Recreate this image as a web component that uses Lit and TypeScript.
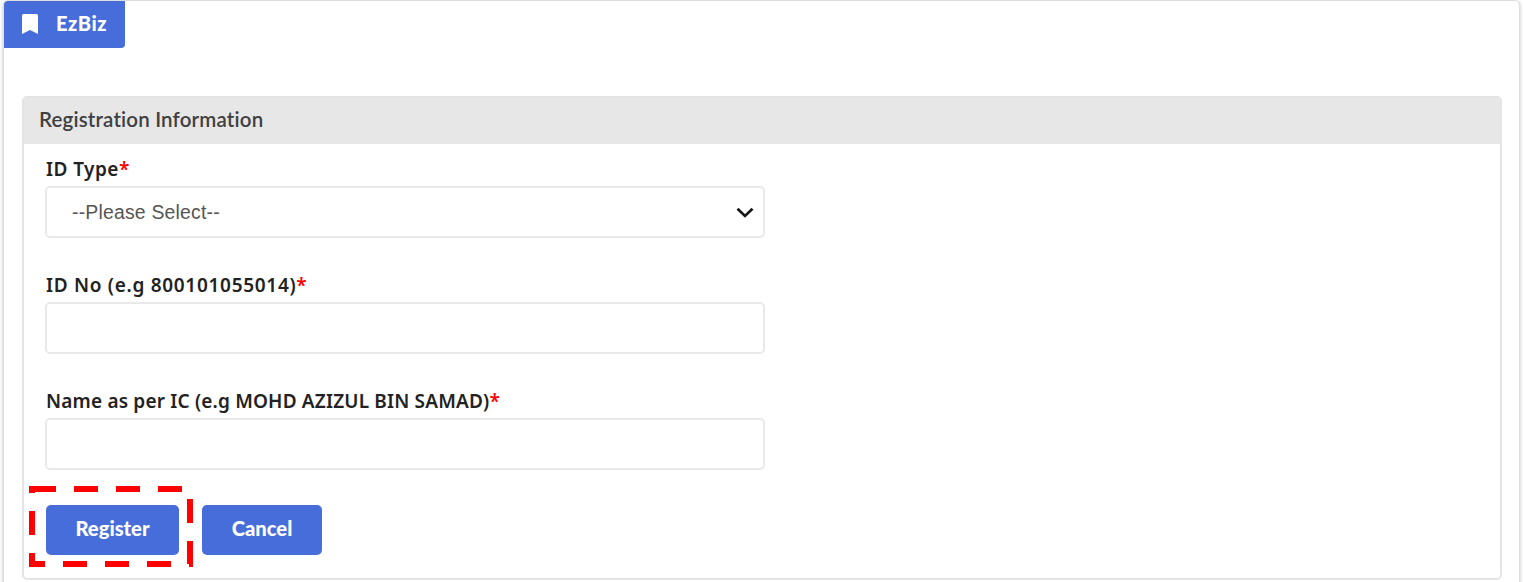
import { LitElement, html, css } from "lit";
import { customElement, property } from "lit/decorators.js";

@customElement("form-field")
class FormField extends LitElement {
  @property() label = "";
  @property({ type: Boolean }) select = false;

  static styles = css`
    :host { display: block; width: 720px; }
    .label {
      display: block; height: 28px; padding-left: 1px; white-space: nowrap;
      font: 600 19px/28px "Noto Sans", sans-serif; color: #222;
      letter-spacing: var(--label-spacing, 0);
    }
    .req { color: #f00; }
    .control {
      box-sizing: border-box; width: 720px; height: 52px; margin-top: 3px;
      border: 2px solid #e9e9e9; border-radius: 5px; background: #fff;
      display: flex; align-items: center; justify-content: space-between;
      padding: 0 9px 0 25px; color: #555;
      font: 19.4px/24px "Liberation Sans", Arial, sans-serif;
    }
    input { outline: none; }
    .value { letter-spacing: 0.2px; }
  `;

  render() {
    return html`
      <label class="label">${this.label}<span class="req">*</span></label>
      ${this.select
        ? html`<div class="control" role="combobox">
            <span class="value">--Please Select--</span>
            <svg width="18" height="12" viewBox="0 0 18 12" fill="none" stroke="#161616" stroke-width="2.7">
              <path d="M1.5 2.8 9 9.9 16.5 2.8" />
            </svg>
          </div>`
        : html`<input class="control" type="text" />`}
    `;
  }
}

@customElement("app-root")
class AppRoot extends LitElement {
  static styles = css`
    :host {
      display: block; box-sizing: border-box; height: 582px; overflow: hidden;
      background: #fff; padding: 0 3px;
      font-family: Lato, sans-serif;
    }
    .page {
      box-sizing: border-box; height: 600px; border: 1px solid #dedede;
      border-radius: 5px; box-shadow: 0 1px 3px 1px #dcdcdc; background: #fff;
    }
    .tab {
      box-sizing: border-box; width: 121px; height: 47px; background: #476ddb;
      border-radius: 4px 0 4px 0; color: #fff; display: flex; align-items: center;
      padding: 0 0 1px 18px; gap: 18px; font-size: 20px; font-weight: 900;
      line-height: 24px; letter-spacing: 0.6px;
    }
    .tab svg { flex: none; }
    .tab-name { margin-top: -2px; }
    .panel {
      box-sizing: border-box; width: 1480px; height: 484px; margin: 48px 0 0 18px;
      border: 2px solid #e4e4e4; border-radius: 5px;
    }
    .head {
      box-sizing: border-box; height: 46px; padding-left: 15px; background: #e7e7e7;
      color: #404040; font-size: 20.5px; line-height: 43px; font-weight: 600;
      letter-spacing: 0.17px;
    }
    .body { padding: 11px 0 0 21px; }
    .fields { display: grid; row-gap: 33px; }
    .id-type { --label-spacing: 0.45px; }
    .id-no { --label-spacing: 0.7px; }
    .full-name { --label-spacing: 0.18px; }
    .actions { display: flex; gap: 23px; margin-top: 35px; padding-left: 1px; }
    .btn {
      box-sizing: border-box; width: 120px; height: 50px; padding: 0 0 3px; border: 0;
      border-radius: 5px; background: #476ddb; color: #fff; text-align: center;
      font: 900 20.2px/47px Lato, sans-serif;
    }
    .primary { position: relative; width: 133px; }
    .marker { position: absolute; left: -17px; top: -19px; overflow: visible; pointer-events: none; }
  `;

  render() {
    return html`
      <main class="page">
        <div class="tab">
          <svg width="16" height="20" viewBox="0 0 16 20" fill="#fff">
            <path d="M0 1.5Q0 0 1.5 0h13Q16 0 16 1.5V20L8 16 0 20Z" />
          </svg>
          <span class="tab-name">EzBiz</span>
        </div>
        <section class="panel">
          <header class="head">Registration Information</header>
          <div class="body">
            <div class="fields">
              <form-field class="id-type" label="ID Type" select></form-field>
              <form-field class="id-no" label="ID No (e.g 800101055014)"></form-field>
              <form-field class="full-name" label="Name as per IC (e.g MOHD AZIZUL BIN SAMAD)"></form-field>
            </div>
            <div class="actions">
              <button class="btn primary">
                Register
                <svg class="marker" width="164" height="81" fill="none" stroke="#f00" stroke-width="6">
                  <path d="M3 3H161V78H3Z" stroke-dasharray="24 18" />
                </svg>
              </button>
              <button class="btn">Cancel</button>
            </div>
          </div>
        </section>
      </main>
    `;
  }
}
